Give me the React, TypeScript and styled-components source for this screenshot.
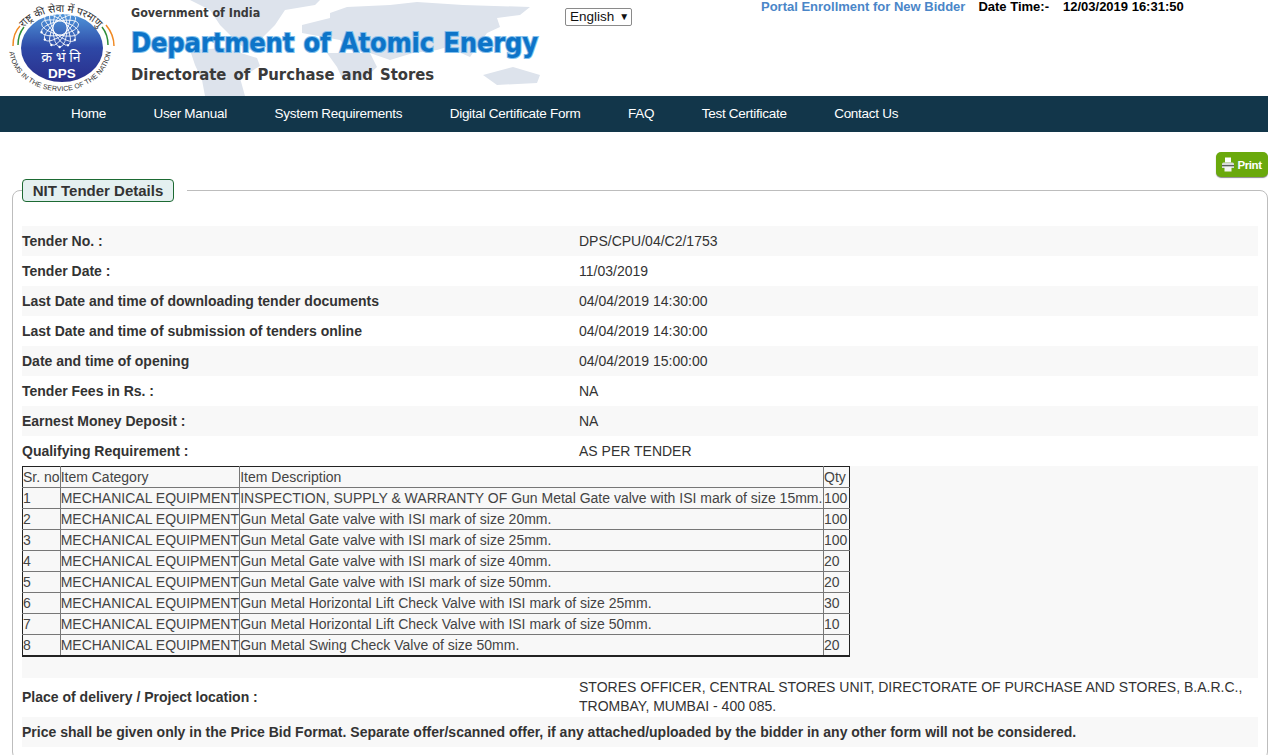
import styled, { createGlobalStyle } from "styled-components";

const GlobalStyle = createGlobalStyle`
  html, body {
    margin: 0;
    padding: 0;
    background: #fff;
    font-family: "Liberation Sans", Arial, sans-serif;
    font-size: 14px;
    color: #333;
    overflow: hidden;
  }
`;

const navItems = [
  "Home",
  "User Manual",
  "System Requirements",
  "Digital Certificate Form",
  "FAQ",
  "Test Certificate",
  "Contact Us",
];

const details = [
  ["Tender No. :", "DPS/CPU/04/C2/1753"],
  ["Tender Date :", "11/03/2019"],
  ["Last Date and time of downloading tender documents", "04/04/2019 14:30:00"],
  ["Last Date and time of submission of tenders online", "04/04/2019 14:30:00"],
  ["Date and time of opening", "04/04/2019 15:00:00"],
  ["Tender Fees in Rs. :", "NA"],
  ["Earnest Money Deposit :", "NA"],
  ["Qualifying Requirement :", "AS PER TENDER"],
];

const items = [
  ["1", "INSPECTION, SUPPLY & WARRANTY OF Gun Metal Gate valve with ISI mark of size 15mm.", "100"],
  ["2", "Gun Metal Gate valve with ISI mark of size 20mm.", "100"],
  ["3", "Gun Metal Gate valve with ISI mark of size 25mm.", "100"],
  ["4", "Gun Metal Gate valve with ISI mark of size 40mm.", "20"],
  ["5", "Gun Metal Gate valve with ISI mark of size 50mm.", "20"],
  ["6", "Gun Metal Horizontal Lift Check Valve with ISI mark of size 25mm.", "30"],
  ["7", "Gun Metal Horizontal Lift Check Valve with ISI mark of size 50mm.", "10"],
  ["8", "Gun Metal Swing Check Valve of size 50mm.", "20"],
];

const atomAngles = [0, 26, 52, 78, 104, 130, 154];

function Logo() {
  return (
    <svg width="118" height="96" viewBox="0 0 118 96">
      <defs>
        <path id="topArc" d="M 16 48 A 45 36 0 0 1 106 48" />
        <path id="bottomArc" d="M 9 48 A 51 43 0 0 0 111 48" />
        <linearGradient id="disc" x1="0" y1="0" x2="0" y2="1">
          <stop offset="0" stopColor="#4f95da" />
          <stop offset="0.5" stopColor="#2e48a6" />
          <stop offset="1" stopColor="#2a2f8c" />
        </linearGradient>
      </defs>
      <ellipse cx="62" cy="48" rx="41" ry="34" fill="url(#disc)" />
      <g fill="none" stroke="#fff" strokeWidth="0.8">
        {atomAngles.map((a) => (
          <ellipse key={a} cx="60" cy="28" rx="7" ry="19" transform={`rotate(${a} 60 28)`} />
        ))}
      </g>
      <g fill="#fff">
        {atomAngles.map((a) => (
          <circle key={a} cx="60" cy="47" r="1.2" transform={`rotate(${a - 77} 60 28)`} />
        ))}
      </g>
      <text x="61" y="62" fontSize="14" fill="#fff" textAnchor="middle" fontFamily="'Noto Sans', sans-serif">
        क्र भं नि
      </text>
      <text x="62" y="78" fontSize="13.5" fontWeight="700" fill="#fff" textAnchor="middle" fontFamily="'Liberation Sans', sans-serif">
        DPS
      </text>
      <g fill="none" strokeWidth="1.5">
        <path d="M 13 46 C 13 38 15 31 20 26" stroke="#f08a24" />
        <path d="M 18 45 C 18 38 20 32 24 27" stroke="#2f8f3a" />
        <path d="M 114 46 C 114 38 111 31 106 25" stroke="#f08a24" />
        <path d="M 108 45 C 108 38 106 32 102 27" stroke="#2f8f3a" />
      </g>
      <text fontSize="10.5" fill="#333" fontFamily="'Noto Sans', sans-serif">
        <textPath href="#topArc" startOffset="50%" textAnchor="middle">
          राष्ट्र की सेवा में परमाणु
        </textPath>
      </text>
      <text fontSize="7" fill="#333" fontFamily="'Liberation Sans', sans-serif">
        <textPath href="#bottomArc" startOffset="50%" textAnchor="middle" textLength="140">
          ATOMS IN THE SERVICE OF THE NATION
        </textPath>
      </text>
    </svg>
  );
}

function WorldMap() {
  return (
    <svg width="370" height="96" viewBox="0 0 370 96" fill="#dde3ec">
      <path d="M 0 0 L 130 0 L 125 5 L 95 10 L 85 25 L 70 40 L 60 50 L 50 45 L 30 25 L 20 10 Z" />
      <path d="M 0 50 L 35 48 L 67 58 L 70 66 L 50 78 L 55 96 L 15 96 L 12 80 L 5 65 Z" />
      <path d="M 112 25 L 140 18 L 140 13 L 157 7 L 200 5 L 227 2 L 273 5 L 340 7 L 330 15 L 307 18 L 310 27 L 297 33 L 280 57 L 257 47 L 247 50 L 223 53 L 200 60 L 180 53 L 160 50 L 150 40 L 112 33 Z" />
      <path d="M 137 53 L 180 53 L 187 67 L 173 80 L 153 80 L 147 67 Z" />
      <path d="M 293 75 L 323 67 L 350 75 L 347 83 L 307 85 Z" />
    </svg>
  );
}

function PrinterGlyph() {
  return (
    <svg width="12" height="15" viewBox="0 0 12 15">
      <rect x="3" y="0.5" width="6" height="5" fill="#fff" />
      <path d="M 1.5 5.5 H 10.5 Q 12 5.5 12 7 V 11 H 0 V 7 Q 0 5.5 1.5 5.5 Z" fill="#d8dcd8" />
      <rect x="0" y="8" width="12" height="1.2" fill="#5b5f5b" />
      <rect x="2.5" y="10" width="7" height="4.5" fill="#f4f4f4" />
    </svg>
  );
}

export default function App() {
  return (
    <>
      <GlobalStyle />
      <Header>
        <LogoSlot>
          <Logo />
        </LogoSlot>
        <Brand>
          <MapLayer>
            <WorldMap />
          </MapLayer>
          <Gov>Government of India</Gov>
          <Dept>Department of Atomic Energy</Dept>
          <Directorate>Directorate of Purchase and Stores</Directorate>
        </Brand>
        <LangBox>
          English <LangArrow>▼</LangArrow>
        </LangBox>
        <TopRight>
          <Enroll>Portal Enrollment for New Bidder</Enroll>
          <Stamp>Date Time:-</Stamp>
          <Stamp>12/03/2019 16:31:50</Stamp>
        </TopRight>
      </Header>

      <Nav>
        {navItems.map((item) => (
          <NavLink key={item}>{item}</NavLink>
        ))}
      </Nav>

      <PrintRow>
        <PrintButton>
          <PrinterGlyph />
          Print
        </PrintButton>
      </PrintRow>

      <Panel>
        <PanelLegend>
          <LegendTag>NIT Tender Details</LegendTag>
        </PanelLegend>
        <Rows>
          {details.map(([label, value]) => (
            <Row key={label}>
              <Label>{label}</Label>
              <Value>{value}</Value>
            </Row>
          ))}
          <TableRow>
            <ItemTable>
              <thead>
                <tr>
                  <Cell>Sr. no</Cell>
                  <Cell>Item Category</Cell>
                  <Cell>Item Description</Cell>
                  <Cell>Qty</Cell>
                </tr>
              </thead>
              <tbody>
                {items.map(([no, desc, qty]) => (
                  <tr key={no}>
                    <Cell>{no}</Cell>
                    <Cell>MECHANICAL EQUIPMENT</Cell>
                    <Cell>{desc}</Cell>
                    <Cell>{qty}</Cell>
                  </tr>
                ))}
              </tbody>
            </ItemTable>
          </TableRow>
          <DeliveryRow>
            <Label>Place of delivery / Project location :</Label>
            <Value>
              STORES OFFICER, CENTRAL STORES UNIT, DIRECTORATE OF PURCHASE AND STORES, B.A.R.C.,
              TROMBAY, MUMBAI - 400 085.
            </Value>
          </DeliveryRow>
          <NoteRow>
            Price shall be given only in the Price Bid Format. Separate offer/scanned offer, if any
            attached/uploaded by the bidder in any other form will not be considered.
          </NoteRow>
        </Rows>
      </Panel>
    </>
  );
}

const Header = styled.header`
  display: flex;
  height: 96px;
  background: #fff;
  overflow: hidden;
`;

const LogoSlot = styled.div`
  width: 118px;
  flex: none;
`;

const Brand = styled.div`
  position: relative;
  width: 447px;
  flex: none;
  padding: 6px 0 0 13px;
  box-sizing: border-box;
`;

const MapLayer = styled.div`
  position: absolute;
  left: 72px;
  top: 0;
  z-index: 0;
`;

const Gov = styled.div`
  position: relative;
  font-family: "DejaVu Sans Condensed", "DejaVu Sans", sans-serif;
  font-stretch: condensed;
  font-size: 12.4px;
  line-height: 14px;
  font-weight: 700;
  color: #3a3a3a;
`;

const Dept = styled.div`
  position: relative;
  margin-top: 7px;
  font-family: "DejaVu Sans Condensed", "DejaVu Sans", sans-serif;
  font-stretch: condensed;
  font-size: 27px;
  line-height: 32px;
  font-weight: 700;
  word-spacing: 1px;
  letter-spacing: -0.15px;
  white-space: nowrap;
  color: #0d74c8;
  -webkit-text-stroke: 2px #82bfec;
  paint-order: stroke fill;
`;

const Directorate = styled.div`
  position: relative;
  margin-top: 6px;
  font-family: "DejaVu Sans Condensed", "DejaVu Sans", sans-serif;
  font-stretch: condensed;
  font-size: 16.5px;
  line-height: 20px;
  font-weight: 700;
  word-spacing: 2px;
  white-space: nowrap;
  color: #3a3a3a;
`;

const LangBox = styled.div`
  flex: none;
  align-self: flex-start;
  margin-top: 8px;
  width: 67px;
  height: 18px;
  padding: 0 0 1px 4px;
  box-sizing: border-box;
  border: 1px solid #8a8a8a;
  border-radius: 2px;
  display: flex;
  align-items: center;
  gap: 5px;
  font-size: 13.5px;
  color: #111;
`;

const LangArrow = styled.span`
  font-size: 10px;
  line-height: 1;
`;

const TopRight = styled.div`
  flex: none;
  display: flex;
  align-items: flex-start;
  padding: 0 0 0 129px;
  line-height: 14px;
`;

const Enroll = styled.span`
  font-size: 13px;
  font-weight: 700;
  color: #4a86c8;
  margin-right: 13px;
`;

const Stamp = styled.span`
  font-size: 13px;
  font-weight: 700;
  color: #000;
  margin-right: 14px;
  white-space: nowrap;
`;

const Nav = styled.nav`
  display: flex;
  align-items: center;
  gap: 47.5px;
  height: 36px;
  padding: 0 0 2px 71px;
  box-sizing: border-box;
  background: #12364a;
`;

const NavLink = styled.a`
  font-size: 13.5px;
  letter-spacing: -0.27px;
  color: #fff;
  white-space: nowrap;
`;

const PrintRow = styled.div`
  display: flex;
  justify-content: flex-end;
  padding-top: 20px;
  height: 47px;
  box-sizing: border-box;
`;

const PrintButton = styled.div`
  display: flex;
  align-items: center;
  justify-content: center;
  gap: 3px;
  width: 52px;
  height: 25px;
  border-radius: 5px;
  background: #6aa90c;
  box-shadow: 0 1px 1px #8a8a8a;
  color: #fff;
  font-family: "Liberation Sans", sans-serif;
  font-size: 11.5px;
  font-weight: 700;
  letter-spacing: -0.4px;
`;

const Panel = styled.fieldset`
  margin: 0 0 0 12px;
  padding: 0 9px 12px 9px;
  width: 1256px;
  box-sizing: border-box;
  border: 1px solid #bdbdbd;
  border-radius: 8px;
  min-width: 0;
`;

const PanelLegend = styled.legend`
  padding: 0 13px 0 0;
  margin: 0;
  line-height: 0;
`;

const LegendTag = styled.span`
  display: inline-block;
  box-sizing: border-box;
  width: 152px;
  height: 23px;
  line-height: 21px;
  text-align: center;
  border: 1px solid #1d6a33;
  border-radius: 4px;
  background: #e4f0f0;
  color: #333;
  font-size: 15px;
  font-weight: 700;
`;

const Rows = styled.div`
  padding-top: 24px;
  & > :nth-child(odd) {
    background: #f8f8f8;
  }
`;

const Row = styled.div`
  display: flex;
  align-items: center;
  height: 30px;
`;

const Label = styled.div`
  width: 557px;
  flex: none;
  font-weight: 700;
  color: #333;
`;

const Value = styled.div`
  color: #333;
  line-height: 19px;
`;

const TableRow = styled.div`
  padding-bottom: 21px;
`;

const Cell = styled.td`
  border: 1px solid #777;
  padding: 0;
  height: 20px;
  line-height: 16px;
  font-size: 14px;
  color: #444;
  white-space: nowrap;

  &:first-child {
    border-left-color: #222;
  }
  &:last-child {
    width: 25px;
    border-right-color: #222;
  }
`;

const ItemTable = styled.table`
  border-collapse: collapse;
  border: 1px solid #222;
  border-bottom-width: 2px;
  width: 828px;

  thead td {
    border-top-color: #222;
  }
`;

const DeliveryRow = styled(Row)`
  height: 39px;
  padding-bottom: 2px;
  box-sizing: border-box;
`;

const NoteRow = styled(Row)`
  font-weight: 700;
  color: #333;
`;
